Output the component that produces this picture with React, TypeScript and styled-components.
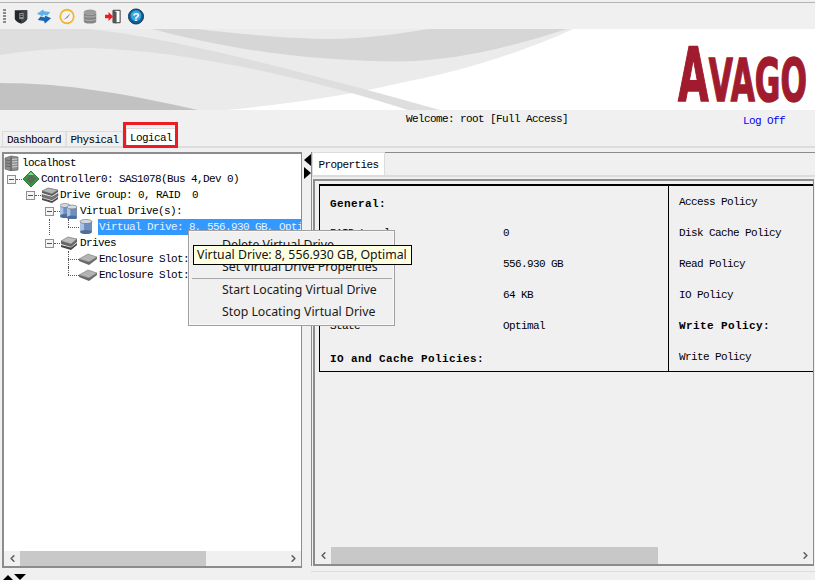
import styled, { createGlobalStyle } from "styled-components";
import { ChevronLeft, ChevronRight } from "lucide-react";

const GlobalStyle = createGlobalStyle`
  html, body {
    margin: 0;
    padding: 0;
    background: #f0f0f0;
  }
`;

const mono = `"Liberation Mono", "DejaVu Sans Mono", monospace`;

const Page = styled.div`
  position: relative;
  width: 815px;
  height: 580px;
  overflow: hidden;
  background: #f0f0f0;
  font-family: ${mono};
  font-size: 11px;
  letter-spacing: -0.6px;
  color: #000;
`;

const Toolbar = styled.div`
  height: 26px;
  margin-top: 2px;
  border-top: 1px solid #b4b4b4;
  display: flex;
  align-items: center;
  padding-left: 3px;
  gap: 7px;
`;
const Grip = styled.div`
  width: 3px;
  height: 14px;
  background: repeating-linear-gradient(#8a8a8a 0 2px, transparent 2px 3px);
`;
const ToolIcon = styled.svg`
  width: 16px;
  height: 17px;
  flex: none;
`;

const Banner = styled.div`
  height: 81px;
  background: #fff;
  display: flex;
  justify-content: flex-end;
  position: relative;
  overflow: hidden;
`;
const Swoosh = styled.svg`
  position: absolute;
  left: 0;
  top: 0;
`;
const Logo = styled.svg`
  position: relative;
  width: 140px;
  height: 81px;
  margin-right: 2px;
`;
const LogoText = styled.text`
  text-transform: uppercase;
  font-family: "DejaVu Sans", sans-serif;
  font-weight: 700;
  letter-spacing: 0;
  fill: #a01b2d;
  stroke: #a01b2d;
  stroke-width: 1.6px;
`;

const WelcomeRow = styled.div`
  height: 18px;
  display: flex;
  padding-left: 406px;
  padding-right: 30px;
`;
const Welcome = styled.span`
  line-height: 18px;
`;
const LogOff = styled.span`
  margin-left: auto;
  line-height: 22px;
  color: #0000ff;
`;

const TabBar = styled.div`
  height: 20px;
  box-sizing: border-box;
  padding-left: 2px;
  display: flex;
  align-items: flex-end;
  border-bottom: 2px solid #dcdcdc;
`;
const Tab = styled.div<{ $active?: boolean; $w: number }>`
  width: ${(p) => p.$w}px;
  height: ${(p) => (p.$active ? 18 : 15)}px;
  margin-left: ${(p) => (p.$active ? 3 : 0)}px;
  box-sizing: border-box;
  text-align: center;
  line-height: ${(p) => (p.$active ? 18 : 17)}px;
  background: ${(p) => (p.$active ? "#fff" : "#f0f0f0")};
  border: 1px solid #dcdcdc;
  border-bottom: none;
  border-right-color: ${(p) => (p.$active ? "#dcdcdc" : "#e4e4e4")};
`;
const RedBox = styled.div`
  position: absolute;
  left: 123px;
  top: 122px;
  width: 55px;
  height: 26px;
  box-sizing: border-box;
  border: 3px solid #ed1c24;
`;

const Main = styled.div`
  display: flex;
  height: 422px;
`;
const TreePanel = styled.div`
  width: 300px;
  height: 416px;
  margin: 4px 0 0 2px;
  flex: none;
  box-sizing: border-box;
  border: 2px solid #8c8c8c;
  border-right-width: 1px;
  display: flex;
  flex-direction: column;
`;
const TreeArea = styled.div`
  flex: 1;
  background: #fff;
  overflow: hidden;
  padding-top: 1px;
`;
const Row = styled.div`
  height: 16px;
  display: flex;
  align-items: center;
  white-space: nowrap;
  margin-left: -1px;
`;
const Cell = styled.div<{ $kind?: "line" | "elbow" | "tee" }>`
  position: relative;
  width: 19px;
  height: 16px;
  flex: none;
  &::before {
    content: "";
    display: ${(p) => (p.$kind ? "block" : "none")};
    position: absolute;
    left: 8px;
    top: 0;
    height: ${(p) => (p.$kind === "elbow" ? 8 : 16)}px;
    border-left: 1px dotted #555;
  }
  &::after {
    content: "";
    display: ${(p) => (p.$kind === "elbow" || p.$kind === "tee" ? "block" : "none")};
    position: absolute;
    left: 8px;
    top: 8px;
    width: 11px;
    border-top: 1px dotted #555;
  }
`;
const Expander = styled.div`
  position: relative;
  width: 19px;
  height: 16px;
  flex: none;
  &::before {
    content: "";
    position: absolute;
    left: 4px;
    top: 4px;
    width: 7px;
    height: 7px;
    border: 1px solid #8f8f8f;
    background: linear-gradient(#555, #555) center / 5px 1px no-repeat, #f4f4f4;
  }
  &::after {
    content: "";
    position: absolute;
    left: 13px;
    top: 8px;
    width: 6px;
    border-top: 1px dotted #555;
  }
`;
const NodeIcon = styled.svg<{ $mr?: number }>`
  width: 18px;
  height: 16px;
  flex: none;
  margin-right: ${(p) => p.$mr ?? 1}px;
`;
const Label = styled.span<{ $selected?: boolean }>`
  line-height: 16px;
  flex: ${(p) => (p.$selected ? 1 : "none")};
  padding-left: ${(p) => (p.$selected ? 1 : 0)}px;
  background: ${(p) => (p.$selected ? "#3399ff" : "transparent")};
  color: ${(p) => (p.$selected ? "#e8f2ff" : "#000")};
`;

const ScrollBar = styled.div<{ $h: number }>`
  height: ${(p) => p.$h}px;
  flex: none;
  display: flex;
  align-items: stretch;
  background: #f0f0f0;
`;
const ScrollBtn = styled.div`
  width: 16px;
  flex: none;
  display: flex;
  align-items: center;
  justify-content: center;
  color: #606060;
`;
const ScrollThumb = styled.div<{ $w: number }>`
  width: ${(p) => p.$w}px;
  background: #c8c8c8;
`;
const ScrollGap = styled.div`
  flex: 1;
`;

const Splitter = styled.div`
  width: 9px;
  flex: none;
  padding-top: 6px;
  box-sizing: border-box;
  display: flex;
  flex-direction: column;
  gap: 1px;
  align-items: flex-start;
`;
const Arrow = styled.div<{ $left?: boolean }>`
  width: 0;
  height: 0;
  margin-left: 2px;
  border-top: 6px solid transparent;
  border-bottom: 6px solid transparent;
  ${(p) =>
    p.$left ? "border-right: 7px solid #000;" : "border-left: 7px solid #000;"}
`;

const PropsSide = styled.div`
  flex: 1;
  min-width: 0;
  margin-top: 4px;
  border-top: 1px solid #8c8c8c;
  border-left: 1px solid #8c8c8c;
  display: flex;
  flex-direction: column;
  height: 414px;
  box-sizing: border-box;
`;
const PropsTabBar = styled.div`
  height: 24px;
  flex: none;
  display: flex;
  align-items: flex-end;
  box-sizing: border-box;
  border-bottom: 2px solid #dcdcdc;
`;
const PropsTab = styled.div`
  width: 73px;
  height: 23px;
  box-sizing: border-box;
  background: #fff;
  line-height: 25px;
  text-align: center;
  border: 1px solid #dcdcdc;
  border-bottom: none;
`;
const PropsBody = styled.div`
  flex: 1;
  margin: 2px 1px 0 1px;
  border: 2px solid #8c8c8c;
  border-right-width: 1px;
  display: flex;
  flex-direction: column;
`;
const PropsContent = styled.div`
  flex: 1;
  padding: 3px 0 0 4px;
`;
const PropTable = styled.div`
  display: grid;
  grid-template-columns: 349px 1fr;
  grid-template-rows: 100%;
  height: 188px;
  box-sizing: border-box;
  border-top: 2px solid #000;
  border-left: 1px solid #000;
  border-bottom: 1px solid #000;
`;
const Column = styled.div<{ $first?: boolean; $pad: number }>`
  min-height: 0;
  padding: ${(p) => (p.$first ? 3 : 1)}px 0 0 ${(p) => p.$pad}px;
  border-right: ${(p) => (p.$first ? "1px solid #000" : "none")};
  display: flex;
  flex-direction: column;
`;
const PropRow = styled.div<{ $h?: number; $lh?: number }>`
  height: ${(p) => p.$h ?? 31}px;
  line-height: ${(p) => p.$lh ?? 31}px;
  display: flex;
  flex: none;
`;
const PropLabel = styled.span<{ $bold?: boolean }>`
  width: 173px;
  flex: none;
  white-space: nowrap;
  font-weight: ${(p) => (p.$bold ? 700 : 400)};
  letter-spacing: ${(p) => (p.$bold ? "0.4px" : "-0.6px")};
`;

const BottomRule = styled.div`
  border-top: 1px solid #dcdcdc;
  margin: 1px 0 0 311px;
`;
const Status = styled.div`
  display: flex;
  align-items: flex-end;
  gap: 1px;
  height: 8px;
  padding-left: 3px;
`;
const TriUp = styled.div`
  width: 0;
  height: 0;
  border-left: 5px solid transparent;
  border-right: 5px solid transparent;
  border-bottom: 5px solid #000;
`;
const TriDown = styled.div`
  width: 0;
  height: 0;
  border-left: 6px solid transparent;
  border-right: 6px solid transparent;
  border-top: 6px solid #000;
`;

const Menu = styled.div`
  position: absolute;
  left: 188px;
  top: 230px;
  width: 207px;
  height: 96px;
  box-sizing: border-box;
  padding-top: 3px;
  background: #f0f0f0;
  border: 1px solid #a0a0a0;
  box-shadow: inset 0 0 0 1px #f8f8f8;
  font-family: "Noto Sans", "Open Sans", sans-serif;
  font-size: 12.3px;
  letter-spacing: 0;
  color: #1a1a1a;
`;
const MenuItem = styled.div`
  height: 22px;
  line-height: 22px;
  padding-left: 33px;
  white-space: nowrap;
`;
const MenuSep = styled.div`
  height: 1px;
  margin: 0 2px 0 3px;
  background: #a8a8a8;
`;
const Tooltip = styled.div`
  position: absolute;
  left: 193px;
  top: 245px;
  width: 219px;
  height: 20px;
  box-sizing: border-box;
  padding-left: 3px;
  background: #ffffe1;
  border: 1px solid #000;
  font-family: "Noto Sans", "Open Sans", sans-serif;
  font-size: 12.3px;
  letter-spacing: 0;
  line-height: 17px;
  white-space: nowrap;
  color: #111;
`;

const ServerIcon = () => (
  <NodeIcon viewBox="0 0 18 16" $mr={1}>
    <path d="M2 3 8 1 15 2V15L8 16 2 14Z" fill="#8e8e8e" stroke="#555" strokeWidth=".6" />
    <path d="M8 2V16" stroke="#444" strokeWidth=".8" />
    <path d="M9 4.5 14.5 4M9 7 14.5 6.5M9 9.5 14.5 9M9 12 14.5 11.5" stroke="#d8d8d8" strokeWidth=".9" />
    <path d="M3 5 7 5.5M3 8 7 8.5M3 11 7 11.5" stroke="#5a5a5a" strokeWidth=".9" />
  </NodeIcon>
);
const ControllerIcon = () => (
  <NodeIcon viewBox="0 0 18 16" $mr={1}>
    <path d="M9 0 17 8 9 16 1 8Z" fill="#2d9a3d" stroke="#14501e" strokeWidth=".7" />
    <path d="M9 3 14 8 9 13 4 8Z" fill="#5a6a55" />
    <path d="M9 1 12 4 6 4Z" fill="#7fd98a" />
  </NodeIcon>
);
const StackIcon = () => (
  <NodeIcon viewBox="0 0 18 16" $mr={1}>
    <path d="M1 4 7 1 17 3 11 7Z" fill="#b5b5b5" stroke="#444" strokeWidth=".5" />
    <path d="M1 4V6L11 9 17 5V3L11 7Z" fill="#5c5c5c" />
    <path d="M1 7.5V10L11 13 17 9V6.5L11 10Z" fill="#777" stroke="#333" strokeWidth=".4" />
    <path d="M1 11V13L11 16 17 12V10L11 14Z" fill="#4a4a4a" />
  </NodeIcon>
);
const DrivesIcon = () => (
  <NodeIcon viewBox="0 0 18 16" $mr={2}>
    <path d="M1 6 8 2 17 4 11 9Z" fill="#bdbdbd" stroke="#555" strokeWidth=".5" />
    <path d="M1 6V9L11 12 17 7V4L11 9Z" fill="#666" />
    <path d="M1 10V12L11 15 17 10V8L11 12.5Z" fill="#444" />
  </NodeIcon>
);
const Cylinder = ({ x, w }: { x: number; w: number }) => (
  <g>
    <rect x={x} y={2} width={w} height={11} fill="#6f8fbd" />
    <rect x={x} y={2} width={w / 3} height={11} fill="#aac3e4" />
    <ellipse cx={x + w / 2} cy={13} rx={w / 2} ry={2} fill="#4e6d9c" />
    <ellipse cx={x + w / 2} cy={2.5} rx={w / 2} ry={2} fill="#d3dbe6" stroke="#555" strokeWidth=".5" />
  </g>
);
const VolumesIcon = () => (
  <NodeIcon viewBox="0 0 18 16" $mr={2}>
    <Cylinder x={0} w={10} />
    <g transform="translate(0 1.5)">
      <Cylinder x={7} w={10} />
    </g>
  </NodeIcon>
);
const VolumeIcon = () => (
  <NodeIcon viewBox="0 0 18 16" $mr={1}>
    <Cylinder x={1} w={12} />
  </NodeIcon>
);
const DiskIcon = () => (
  <NodeIcon viewBox="0 0 18 16" $mr={2}>
    <path d="M0 8 9 3 18 6 10 11Z" fill="#b4b4b4" stroke="#666" strokeWidth=".5" />
    <path d="M0 8V10L10 14 18 8V6L10 11Z" fill="#6a6a6a" />
  </NodeIcon>
);

const vdText = "Virtual Drive: 8, 556.930 GB, Optimal";

const Scroll = ({ h, thumb }: { h: number; thumb: number }) => (
  <ScrollBar $h={h}>
    <ScrollBtn>
      <ChevronLeft size={11} strokeWidth={3.5} />
    </ScrollBtn>
    <ScrollThumb $w={thumb} />
    <ScrollGap />
    <ScrollBtn>
      <ChevronRight size={11} strokeWidth={3.5} />
    </ScrollBtn>
  </ScrollBar>
);

const App = () => {
  return (
    <Page>
      <GlobalStyle />
      <Toolbar>
        <Grip />
        <ToolIcon viewBox="0 0 18 18">
          <path d="M2 2H16V11C16 14 12 16 9 17 6 16 2 14 2 11Z" fill="#24262b" />
          <path d="M9 2H16V11C16 14 12 16 9 17Z" fill="#3e4149" />
          <path d="M7 5H12V12H7Z" fill="#8b8e96" />
          <path d="M8 7H11M8 9H11" stroke="#222" />
        </ToolIcon>
        <ToolIcon viewBox="0 0 18 18">
          <path d="M16 4 9 3 8 1 1 6 8 9V7L13 8Z" fill="#63b0e6" />
          <path d="M2 13 9 14 10 17 17 11 10 8V10L5 9Z" fill="#1666b4" />
        </ToolIcon>
        <ToolIcon viewBox="0 0 18 18">
          <circle cx="9" cy="9" r="7.6" fill="#f4f4f4" stroke="#f5b431" strokeWidth="2" />
          <path d="M5 13 13 5 10 10Z" fill="#888" />
        </ToolIcon>
        <ToolIcon viewBox="0 0 18 18">
          <ellipse cx="9" cy="4" rx="7" ry="3" fill="#9c9c9c" />
          <path d="M2 4V14C2 16 5 17 9 17S16 16 16 14V4C16 6 13 7 9 7S2 6 2 4Z" fill="#858585" />
          <path d="M2 8C4 10 14 10 16 8M2 12C4 14 14 14 16 12" stroke="#b4b4b4" fill="none" />
        </ToolIcon>
        <ToolIcon viewBox="0 0 18 18">
          <path d="M9 2H17V16H9Z" fill="#fff" stroke="#222" />
          <path d="M9 2 13 4V17L9 16Z" fill="#555" />
          <path d="M0 7H4V4L9 9 4 14V11H0Z" fill="#ea1c24" />
        </ToolIcon>
        <ToolIcon viewBox="0 0 18 18">
          <circle cx="9" cy="9" r="8.5" fill="#0d5f96" stroke="#0b2c4c" />
          <circle cx="9" cy="8" r="6" fill="#37a4dc" />
          <text x="9" y="14" textAnchor="middle" fontFamily="Liberation Sans" fontSize="13" fontWeight="700" fill="#fff" letterSpacing="0">
            ?
          </text>
        </ToolIcon>
      </Toolbar>

      <Banner>
        <Swoosh width="600" height="81" viewBox="0 0 600 81">
          <path d="M0 0H573C520 25 450 45 400 54 340 68 280 76 225 81H0Z" fill="#ebebeb" />
          <path d="M0 0H88C170 8 300 42 440 81H408C330 56 200 22 90 19 55 19 25 22 0 26Z" fill="#dedede" />
          <path d="M152 0C220 18 300 32 400 32.5 460 32 520 15 567 0H428C380 8 340 12 300 9 260 7 230 4 197 0Z" fill="#d6d6d6" />
          <path d="M0 54C70 54 130 66 198 81H0Z" fill="#c2c2c2" />
        </Swoosh>
        <Logo viewBox="0 0 140 81">
          <LogoText x="5" y="71.5" textLength="129" lengthAdjust="spacingAndGlyphs" fontSize="75">
            A<tspan fontSize="59">vago</tspan>
          </LogoText>
        </Logo>
      </Banner>

      <WelcomeRow>
        <Welcome>Welcome: root [Full Access]</Welcome>
        <LogOff>Log Off</LogOff>
      </WelcomeRow>

      <TabBar>
        <Tab $w={64}>Dashboard</Tab>
        <Tab $w={57}>Physical</Tab>
        <Tab $active $w={50}>Logical</Tab>
      </TabBar>

      <Main>
        <TreePanel>
          <TreeArea>
            <Row>
              <ServerIcon />
              <Label>localhost</Label>
            </Row>
            <Row>
              <Expander />
              <ControllerIcon />
              <Label>Controller0: SAS1078(Bus 4,Dev 0)</Label>
            </Row>
            <Row>
              <Cell />
              <Expander />
              <StackIcon />
              <Label>Drive Group: 0, RAID&nbsp;&nbsp;0</Label>
            </Row>
            <Row>
              <Cell />
              <Cell />
              <Expander />
              <VolumesIcon />
              <Label>Virtual Drive(s):</Label>
            </Row>
            <Row>
              <Cell />
              <Cell />
              <Cell $kind="line" />
              <Cell $kind="elbow" />
              <VolumeIcon />
              <Label $selected>{vdText}</Label>
            </Row>
            <Row>
              <Cell />
              <Cell />
              <Expander />
              <DrivesIcon />
              <Label>Drives</Label>
            </Row>
            <Row>
              <Cell />
              <Cell />
              <Cell />
              <Cell $kind="tee" />
              <DiskIcon />
              <Label>Enclosure Slot: 0</Label>
            </Row>
            <Row>
              <Cell />
              <Cell />
              <Cell />
              <Cell $kind="elbow" />
              <DiskIcon />
              <Label>Enclosure Slot: 1</Label>
            </Row>
          </TreeArea>
          <Scroll h={15} thumb={186} />
        </TreePanel>

        <Splitter>
          <Arrow $left />
          <Arrow />
        </Splitter>

        <PropsSide>
          <PropsTabBar>
            <PropsTab>Properties</PropsTab>
          </PropsTabBar>
          <PropsBody>
            <PropsContent>
              <PropTable>
                <Column $first $pad={10}>
                  <PropRow $h={29}>
                    <PropLabel $bold>General:</PropLabel>
                  </PropRow>
                  <PropRow>
                    <PropLabel>RAID Level</PropLabel>0
                  </PropRow>
                  <PropRow>
                    <PropLabel>Size</PropLabel>556.930 GB
                  </PropRow>
                  <PropRow>
                    <PropLabel>Strip Size</PropLabel>64 KB
                  </PropRow>
                  <PropRow>
                    <PropLabel>State</PropLabel>Optimal
                  </PropRow>
                  <PropRow $lh={35}>
                    <PropLabel $bold>IO and Cache Policies:</PropLabel>
                  </PropRow>
                </Column>
                <Column $pad={10}>
                  <PropRow>Access Policy</PropRow>
                  <PropRow>Disk Cache Policy</PropRow>
                  <PropRow>Read Policy</PropRow>
                  <PropRow>IO Policy</PropRow>
                  <PropRow>
                    <PropLabel $bold>Write Policy:</PropLabel>
                  </PropRow>
                  <PropRow>Write Policy</PropRow>
                </Column>
              </PropTable>
            </PropsContent>
            <Scroll h={17} thumb={327} />
          </PropsBody>
        </PropsSide>
      </Main>

      <BottomRule />
      <Status>
        <TriUp />
        <TriDown />
      </Status>

      <RedBox />
      <Menu>
        <MenuItem>Delete Virtual Drive</MenuItem>
        <MenuItem>Set Virtual Drive Properties</MenuItem>
        <MenuSep />
        <MenuItem>Start Locating Virtual Drive</MenuItem>
        <MenuItem>Stop Locating Virtual Drive</MenuItem>
      </Menu>
      <Tooltip>{vdText}</Tooltip>
    </Page>
  );
};

export default App;
